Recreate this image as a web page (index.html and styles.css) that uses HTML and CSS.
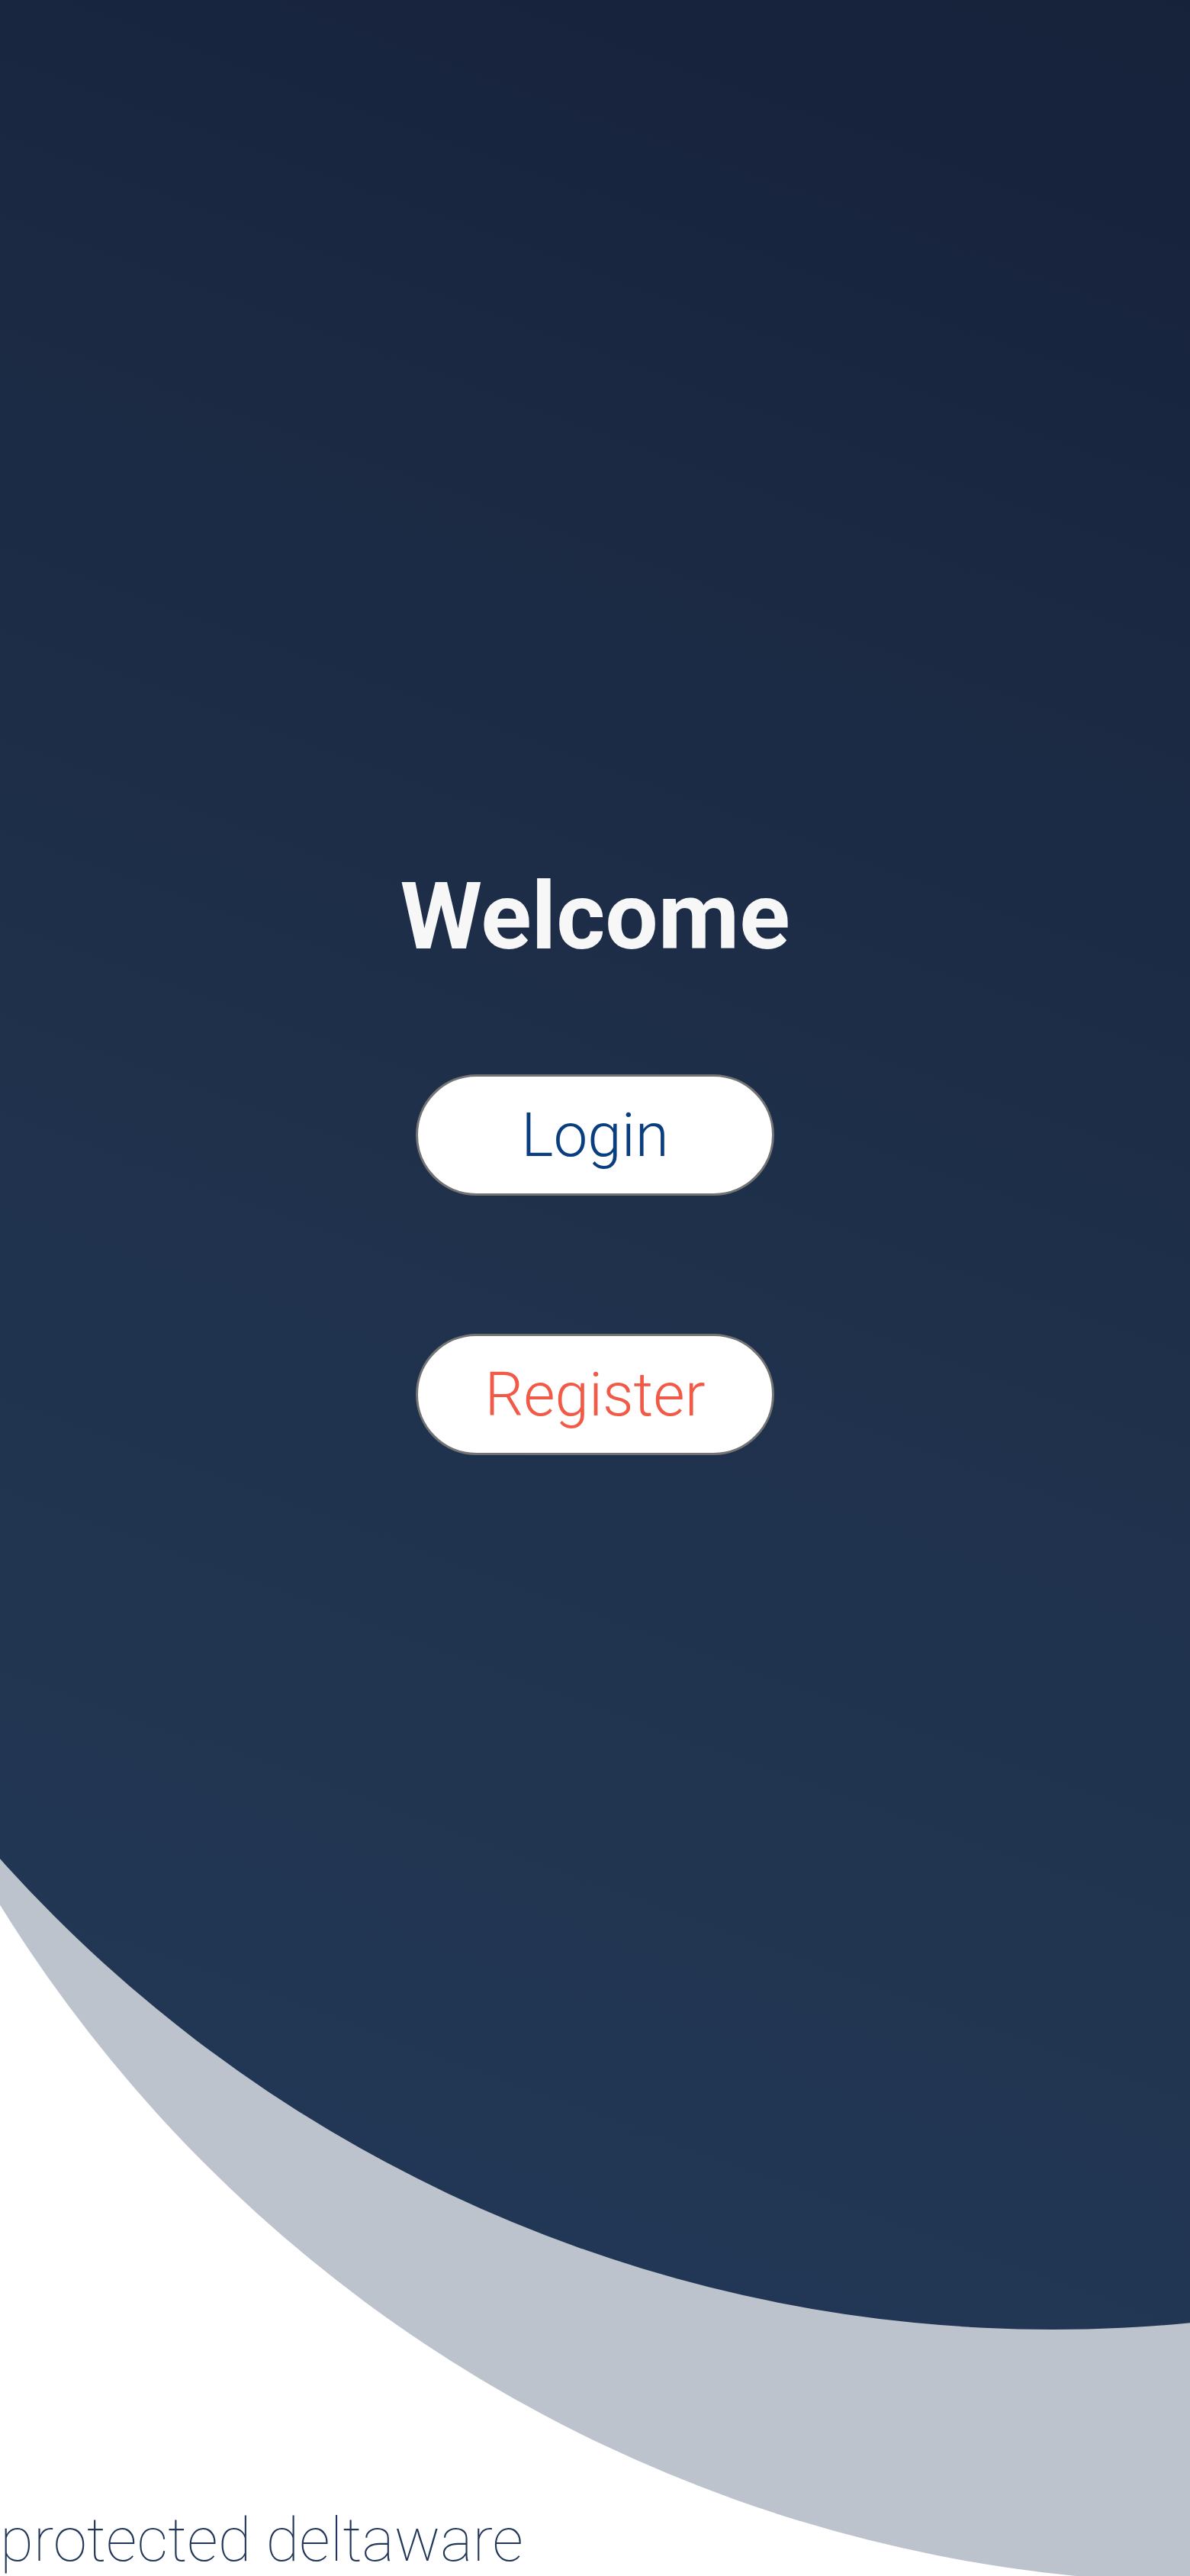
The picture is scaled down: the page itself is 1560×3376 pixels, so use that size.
FILE: index.html
```html
<!DOCTYPE html>
<html lang="en">
<head>
<meta charset="utf-8">
<title>Welcome</title>
<link rel="stylesheet" href="styles.css">
</head>
<body>
<div class="page">
  <div class="shape shape-gray"></div>
  <div class="shape shape-dark"></div>
  <main class="content">
    <h1 class="title">Welcome</h1>
    <div class="actions">
      <button class="pill pill-login" type="button">Login</button>
      <button class="pill pill-register" type="button">Register</button>
    </div>
  </main>
  <footer class="footer">protected deltaware</footer>
</div>
</body>
</html>
```
FILE: styles.css
```css
html, body {
  margin: 0;
  padding: 0;
  background: #ffffff;
}

body {
  font-family: Roboto, "Noto Sans", "Liberation Sans", sans-serif;
}

.page {
  position: relative;
  width: 1560px;
  height: 3376px;
  overflow: hidden;
  display: flex;
  flex-direction: column;
}

.shape {
  position: absolute;
  inset: 0;
  pointer-events: none;
}

.shape-gray {
  background: #bcc3cc;
  clip-path: circle(1874px at 1594px 1511px);
}

.shape-dark {
  background: linear-gradient(200deg, #16213a 0%, #1c2b45 30%, #213550 65%, #23395a 100%);
  clip-path: circle(1852px at 1380px 1201px);
}

.content {
  position: relative;
  display: flex;
  flex-direction: column;
  align-items: center;
  padding-top: 1140px;
}

.title {
  margin: 0;
  font-size: 123px;
  line-height: 1;
  font-weight: 700;
  color: #f7f7f8;
}

.actions {
  margin-top: 145px;
  display: flex;
  flex-direction: column;
  align-items: center;
  gap: 181px;
}

.pill {
  width: 470px;
  height: 159px;
  box-sizing: border-box;
  border: 3px solid #737373;
  border-radius: 80px;
  background: #ffffff;
  font-family: Roboto, "Noto Sans", "Liberation Sans", sans-serif;
  font-size: 80px;
  font-weight: 300;
  line-height: normal;
  display: flex;
  align-items: center;
  justify-content: center;
  padding: 0;
  cursor: pointer;
}

.pill-login {
  color: #0a3f7f;
}

.pill-register {
  color: #f25a48;
}

.footer {
  position: relative;
  margin-top: auto;
  padding-left: 0;
  font-size: 80px;
  font-weight: 100;
  line-height: normal;
  color: #22375a;
}
```
